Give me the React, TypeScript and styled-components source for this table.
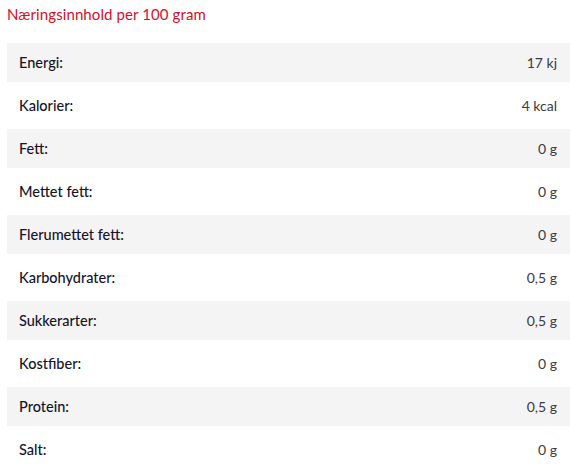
import React from "react";
import styled, { createGlobalStyle } from "styled-components";

const Global = createGlobalStyle`
  html, body { margin: 0; padding: 0; background: #fff; }
  body { font-family: Lato, "Noto Sans", sans-serif; }
`;

const Page = styled.div`
  padding: 5px 0 0 7px;
`;

const Title = styled.h2`
  margin: 0 0 19px;
  font-size: 15px;
  line-height: 19px;
  font-weight: 400;
  letter-spacing: 0.1px;
  color: #d0102b;
`;

const Table = styled.div`
  display: flex;
  flex-direction: column;
  gap: 4px;
`;

const Row = styled.div<{ $shaded: boolean }>`
  display: flex;
  align-items: center;
  justify-content: space-between;
  height: 39px;
  padding: 0 13px 0 12px;
  background: ${(p) => (p.$shaded ? "#f4f4f4" : "transparent")};
  font-size: 14.5px;
`;

const Label = styled.span`
  font-weight: 500;
  color: #14132a;
`;

const Value = styled.span`
  font-weight: 400;
  color: #3a3a44;
  font-size: 14px;
`;

const rows: [string, string][] = [
  ["Energi:", "17 kj"],
  ["Kalorier:", "4 kcal"],
  ["Fett:", "0 g"],
  ["Mettet fett:", "0 g"],
  ["Flerumettet fett:", "0 g"],
  ["Karbohydrater:", "0,5 g"],
  ["Sukkerarter:", "0,5 g"],
  ["Kostfiber:", "0 g"],
  ["Protein:", "0,5 g"],
  ["Salt:", "0 g"],
];

export default function App() {
  return (
    <Page>
      <Global />
      <Title>Næringsinnhold per 100 gram</Title>
      <Table>
        {rows.map(([l, v], i) => (
          <Row key={l} $shaded={i % 2 === 0}>
            <Label>{l}</Label>
            <Value>{v}</Value>
          </Row>
        ))}
      </Table>
    </Page>
  );
}
